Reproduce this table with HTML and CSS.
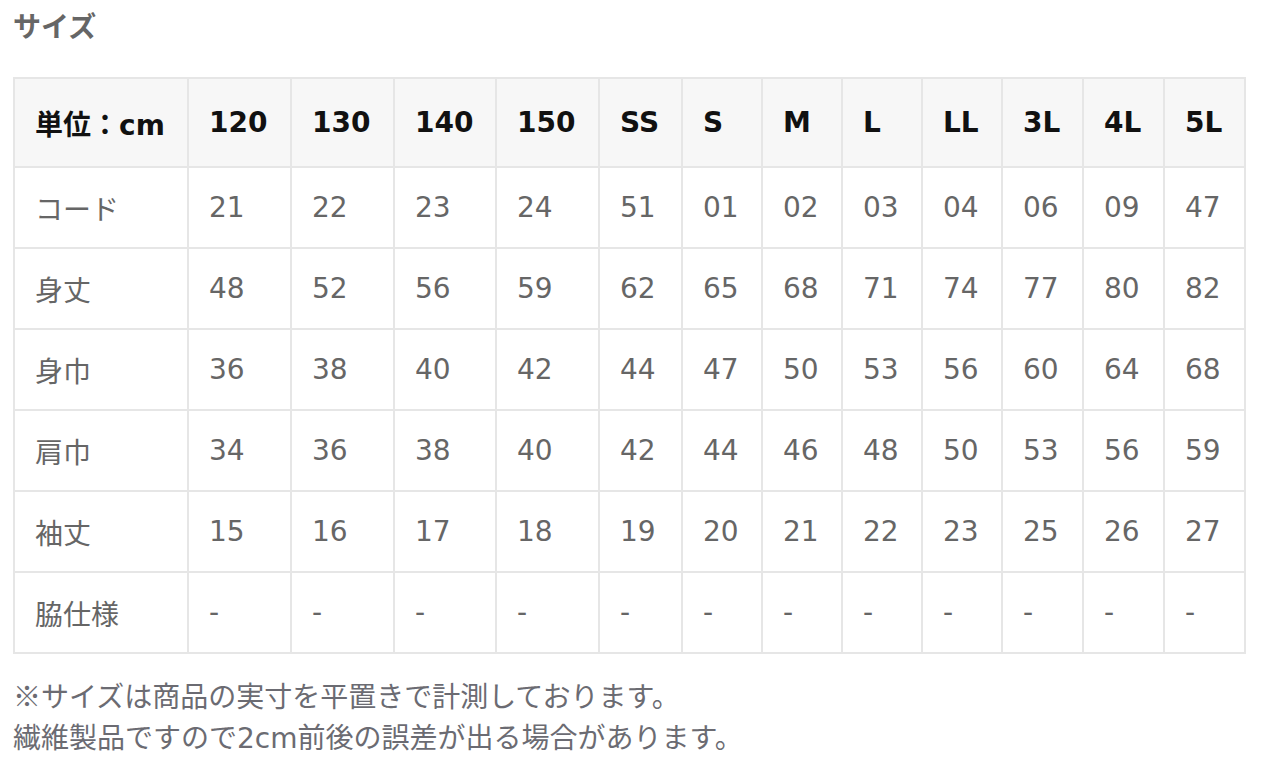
FILE: index.html
```html
<!DOCTYPE html>
<html lang="ja">
<head>
<meta charset="utf-8">
<title>サイズ</title>
<link rel="stylesheet" href="styles.css">
</head>
<body>
<main class="page">
  <h2 class="title">サイズ</h2>
  <table class="size-table">
    <colgroup>
      <col class="c-label">
      <col class="c-wide"><col class="c-wide"><col class="c-wide2"><col class="c-wide">
      <col class="c-ss">
      <col class="c-n"><col class="c-n"><col class="c-n"><col class="c-n">
      <col class="c-m"><col class="c-m"><col class="c-m">
    </colgroup>
    <thead>
      <tr>
        <th>単位<span class="cjk">：</span>cm</th>
        <th>120</th><th>130</th><th>140</th><th>150</th>
        <th>SS</th><th>S</th><th>M</th><th>L</th><th>LL</th><th>3L</th><th>4L</th><th>5L</th>
      </tr>
    </thead>
    <tbody>
      <tr><td>コード</td><td>21</td><td>22</td><td>23</td><td>24</td><td>51</td><td>01</td><td>02</td><td>03</td><td>04</td><td>06</td><td>09</td><td>47</td></tr>
      <tr><td>身丈</td><td>48</td><td>52</td><td>56</td><td>59</td><td>62</td><td>65</td><td>68</td><td>71</td><td>74</td><td>77</td><td>80</td><td>82</td></tr>
      <tr><td>身巾</td><td>36</td><td>38</td><td>40</td><td>42</td><td>44</td><td>47</td><td>50</td><td>53</td><td>56</td><td>60</td><td>64</td><td>68</td></tr>
      <tr><td>肩巾</td><td>34</td><td>36</td><td>38</td><td>40</td><td>42</td><td>44</td><td>46</td><td>48</td><td>50</td><td>53</td><td>56</td><td>59</td></tr>
      <tr><td>袖丈</td><td>15</td><td>16</td><td>17</td><td>18</td><td>19</td><td>20</td><td>21</td><td>22</td><td>23</td><td>25</td><td>26</td><td>27</td></tr>
      <tr><td>脇仕様</td><td>-</td><td>-</td><td>-</td><td>-</td><td>-</td><td>-</td><td>-</td><td>-</td><td>-</td><td>-</td><td>-</td><td>-</td></tr>
    </tbody>
  </table>
  <p class="note"><span class="cjk">※</span>サイズは商品の実寸を平置きで計測しております。<br>繊維製品ですので2cm前後の誤差が出る場合があります。</p>
</main>
</body>
</html>
```

FILE: styles.css
```css
html, body {
  margin: 0;
  padding: 0;
  background: #ffffff;
}

body {
  font-family: "DejaVu Sans", "Noto Sans CJK JP", sans-serif;
}

.cjk {
  font-family: "Noto Sans CJK JP", sans-serif;
}

.page {
  padding: 7px 13px 0 13px;
}

.title {
  margin: 0 0 34px 0;
  font-size: 28px;
  line-height: 36px;
  font-weight: 700;
  color: #666666;
  font-family: "Noto Sans CJK JP", sans-serif;
}

.size-table {
  border-collapse: collapse;
  table-layout: fixed;
  width: 1230px;
  border: 2px solid #e6e6e6;
}

.c-label { width: 174px; }
.c-wide { width: 103px; }
.c-wide2 { width: 102px; }
.c-ss { width: 83px; }
.c-n { width: 80px; }
.c-m { width: 81px; }

.size-table th,
.size-table td {
  border: 2px solid #e6e6e6;
  padding: 0 0 0 20px;
  text-align: left;
  vertical-align: middle;
  font-size: 28px;
  white-space: nowrap;
}

.size-table th {
  height: 87px;
  background: #f7f7f7;
  color: #111111;
  font-weight: 700;
}

.size-table td {
  height: 79px;
  color: #666666;
  font-weight: 400;
}

.note {
  margin: 21px 0 0 0;
  font-size: 28px;
  line-height: 41px;
  color: #6b6b72;
}
```
